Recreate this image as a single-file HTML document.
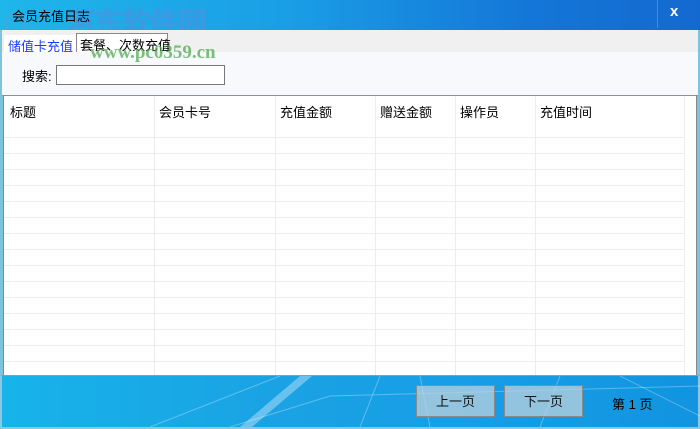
<!DOCTYPE html>
<html><head><meta charset="utf-8"><style>
*{margin:0;padding:0;box-sizing:border-box}
body{width:700px;height:429px;overflow:hidden;position:relative;font:12px "Liberation Sans","Noto Sans CJK SC",sans-serif;background:#7cc3e0}
.abs{position:absolute}
#title{left:0;top:0;width:700px;height:30px;background:linear-gradient(90deg,#1fb6ea 0%,#1a9fe6 40%,#1477d8 75%,#1469cf 100%)}
#tabs{left:2px;top:30px;width:696px;height:22px;background:#f0f0f0}
#panel{left:2px;top:52px;width:696px;height:44px;background:#f8f9fd;border-bottom:1px solid #8a9096}
#grid{left:3px;top:96px;width:694px;height:279px;background:#fff;border-left:1px solid #888;border-right:1px solid #888}
#bottom{left:0;top:375px;width:700px;height:54px;background:linear-gradient(90deg,#17b3ea 0%,#1aa2e4 40%,#169de6 70%,#1294df 100%);border:2px solid #8cc8e4;border-top:1px solid #999}
.btn{top:385px;height:32px;width:79px;background:rgba(190,210,220,.75);border:1px solid #8a8a8a;text-align:center;line-height:31px;font-size:13px;color:#111}
</style></head><body>
<div id="title" class="abs"></div>
<div class="abs" style="left:3px;top:12px;width:24px;height:28px;border-radius:50%;border:5px solid rgba(90,160,220,.35)"></div>
<div class="abs" style="left:66px;top:0px;font:900 29px 'Noto Sans CJK SC','WenQuanYi Zen Hei',sans-serif;color:rgba(70,150,225,.7);letter-spacing:-1px">河东软件园</div>
<div class="abs" style="left:12px;top:6px;font-size:13px;color:#000">会员充值日志</div>
<div class="abs" style="left:670px;top:3px;color:#fff;font-weight:bold;font-size:15px">x</div>
<div class="abs" style="left:657px;top:0;width:1px;height:28px;background:#3c8fd8"></div>
<div id="tabs" class="abs"></div>
<div class="abs" style="left:4px;top:35px;width:72px;height:18px;background:#fff"></div>
<div class="abs" style="left:8px;top:36px;color:#1a3cff;font-size:13px">储值卡充值</div>
<div class="abs" style="left:76px;top:33px;width:92px;height:19px;border:1px solid #888;border-bottom:none;background:#fff"></div>
<div class="abs" style="left:80px;top:35px;font-size:13px">套餐、次数充值</div>
<div id="panel" class="abs"></div>
<div class="abs" style="left:90px;top:42px;font:bold 19px 'Liberation Serif',serif;color:rgba(80,170,80,.75)">www.pc0359.cn</div>
<div class="abs" style="left:22px;top:66px;font-size:13px">搜索:</div>
<div class="abs" style="left:56px;top:65px;width:169px;height:20px;border:1px solid #777;background:#fff"></div>
<div id="grid" class="abs">
<svg width="694" height="279" style="position:absolute;left:0;top:0">
<g stroke="#ececec">
<line x1="0" x2="680" y1="41.5" y2="41.5"/><line x1="0" x2="680" y1="57.5" y2="57.5"/><line x1="0" x2="680" y1="73.5" y2="73.5"/><line x1="0" x2="680" y1="89.5" y2="89.5"/><line x1="0" x2="680" y1="105.5" y2="105.5"/><line x1="0" x2="680" y1="121.5" y2="121.5"/><line x1="0" x2="680" y1="137.5" y2="137.5"/><line x1="0" x2="680" y1="153.5" y2="153.5"/><line x1="0" x2="680" y1="169.5" y2="169.5"/><line x1="0" x2="680" y1="185.5" y2="185.5"/><line x1="0" x2="680" y1="201.5" y2="201.5"/><line x1="0" x2="680" y1="217.5" y2="217.5"/><line x1="0" x2="680" y1="233.5" y2="233.5"/><line x1="0" x2="680" y1="249.5" y2="249.5"/><line x1="0" x2="680" y1="265.5" y2="265.5"/>
<line x1="150.5" x2="150.5" y1="0" y2="279"/><line x1="271.5" x2="271.5" y1="0" y2="279"/><line x1="371.5" x2="371.5" y1="0" y2="279"/><line x1="451.5" x2="451.5" y1="0" y2="279"/><line x1="531.5" x2="531.5" y1="0" y2="279"/><line x1="680.5" x2="680.5" y1="0" y2="279"/>
</g></svg>
<div class="abs" style="left:6px;top:6px;font-size:13px">标题</div>
<div class="abs" style="left:155px;top:6px;font-size:13px">会员卡号</div>
<div class="abs" style="left:276px;top:6px;font-size:13px">充值金额</div>
<div class="abs" style="left:376px;top:6px;font-size:13px">赠送金额</div>
<div class="abs" style="left:456px;top:6px;font-size:13px">操作员</div>
<div class="abs" style="left:536px;top:6px;font-size:13px">充值时间</div>
</div>
<div id="bottom" class="abs"></div>
<svg class="abs" style="left:0;top:376px" width="700" height="51"><g stroke="rgba(255,255,255,.3)" fill="none"><path d="M150 51 L280 0"/><path d="M230 51 L330 20 L700 10"/><path d="M360 51 L380 0"/><path d="M560 0 L540 51"/><path d="M420 0 L430 51"/><path d="M620 0 L700 40"/></g><path d="M240 51 L300 0 L312 0 L252 51Z" fill="rgba(255,255,255,.35)"/></svg>
<div class="abs btn" style="left:416px">上一页</div>
<div class="abs btn" style="left:504px">下一页</div>
<div class="abs" style="left:612px;top:394px;font-size:13px">第 1 页</div>
</body></html>
